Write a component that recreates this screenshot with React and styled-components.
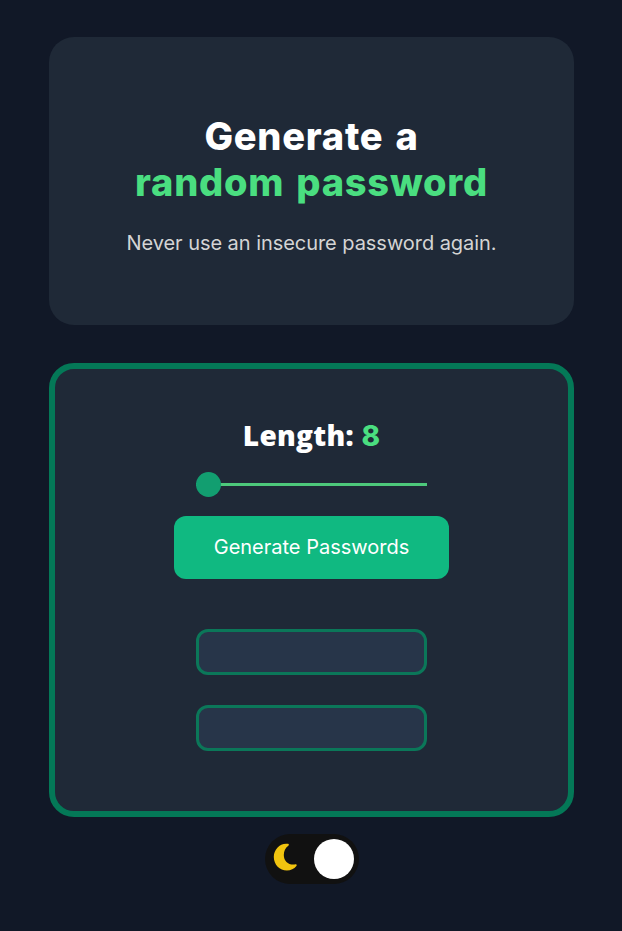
import React, { useState } from "react";
import styled, { createGlobalStyle } from "styled-components";

const GlobalStyle = createGlobalStyle`
  *, *::before, *::after { box-sizing: border-box; }
  body {
    margin: 0;
    background: #111827;
    font-family: Inter, "Liberation Sans", sans-serif;
  }
`;

const Page = styled.main`
  display: flex;
  flex-direction: column;
  align-items: center;
  min-height: 931px;
  padding: 37px 48px 0 49px;
`;

const Card = styled.section`
  display: flex;
  flex-direction: column;
  align-items: center;
  width: 525px;
  border-radius: 25px;
  background: #1f2937;
`;

const Hero = styled(Card)`
  height: 288px;
  padding-top: 76px;
`;

const Generator = styled(Card)`
  height: 454px;
  margin-top: 38px;
  padding-top: 48px;
  border: 6px solid #047857;
`;

const Title = styled.h1`
  margin: 0;
  color: #fff;
  font-size: 38px;
  font-weight: 850;
  line-height: 46px;
  letter-spacing: 0.75px;
  word-spacing: 3px;
  text-align: center;
  white-space: nowrap;
`;

const TitleAccent = styled.span`
  display: block;
  color: #4ade80;
`;

const Tagline = styled.p`
  margin: 25px 0 0;
  color: #d4d4d4;
  font-size: 20px;
  line-height: 26px;
  letter-spacing: -0.05px;
  white-space: nowrap;
`;

const LengthLabel = styled.h2`
  height: 37px;
  margin: 0;
  color: #fff;
  font-family: "Open Sans", sans-serif;
  font-size: 28px;
  font-weight: 800;
  line-height: 37px;
  letter-spacing: 0.3px;
  white-space: nowrap;
`;

const LengthValue = styled.span`
  color: #4ade80;
  font-family: Inter, sans-serif;
  letter-spacing: 0;
`;

const Slider = styled.input`
  appearance: none;
  width: 231px;
  height: 25px;
  margin: 18px 0 0;
  background: linear-gradient(#4dc87b, #4dc87b) center / 100% 3px no-repeat;

  &::-webkit-slider-thumb {
    appearance: none;
    width: 25px;
    height: 25px;
    border-radius: 50%;
    background: #129e70;
  }
`;

const GenerateButton = styled.button`
  width: 275px;
  height: 63px;
  margin: 19px 0 50px;
  padding: 0 0 2px;
  border: 0;
  border-radius: 12px;
  background: #10b981;
  color: #fff;
  font: 400 20px/26px Inter, sans-serif;
`;

const PasswordField = styled.input`
  width: 231px;
  height: 46px;
  margin: 0 0 30px;
  padding: 0 12px;
  border: 3px solid #0b7759;
  border-radius: 12px;
  background: #273549;
  color: #fff;
  font: 400 16px Inter, sans-serif;
`;

const Toggle = styled.button`
  display: flex;
  align-items: center;
  justify-content: space-between;
  width: 94px;
  height: 50px;
  margin: 17px 0 0;
  padding: 0 4.5px 0 8px;
  border: 0;
  border-radius: 25px;
  background: #111;
`;

const Moon = styled.svg`
  width: 25px;
  height: 28px;
  margin-bottom: 4px;
`;

const Knob = styled.span`
  width: 40.5px;
  height: 40.5px;
  border-radius: 50%;
  background: #fff;
`;

export default function App() {
  const [length, setLength] = useState(8);
  return (
    <>
      <GlobalStyle />
      <Page>
        <Hero>
          <Title>
            Generate a<TitleAccent>random password</TitleAccent>
          </Title>
          <Tagline>Never use an insecure password again.</Tagline>
        </Hero>
        <Generator>
          <LengthLabel>
            Length: <LengthValue>{length}</LengthValue>
          </LengthLabel>
          <Slider
            type="range"
            min="8"
            max="20"
            value={length}
            aria-label="Password length"
            onChange={(e) => setLength(Number(e.target.value))}
          />
          <GenerateButton>Generate Passwords</GenerateButton>
          <PasswordField readOnly aria-label="First password" />
          <PasswordField readOnly aria-label="Second password" />
        </Generator>
        <Toggle aria-label="Toggle theme">
          <Moon viewBox="0 0 25 28" aria-hidden="true">
            <path
              d="M15 .8C7.300-.4.800 6.100.800 13.900.800 21.600 6.700 27.500 13.900 27.500c3.900 0 7.200-1.700 9.500-4.500.6-.8.100-1.900-.9-1.700-6.600 1.200-11.700-3-11.700-9.400 0-3.600 1.500-7.200 4.500-9.100.9-.6.700-1.800-.3-2Z"
              fill="#f1c40f"
            />
          </Moon>
          <Knob />
        </Toggle>
      </Page>
    </>
  );
}
